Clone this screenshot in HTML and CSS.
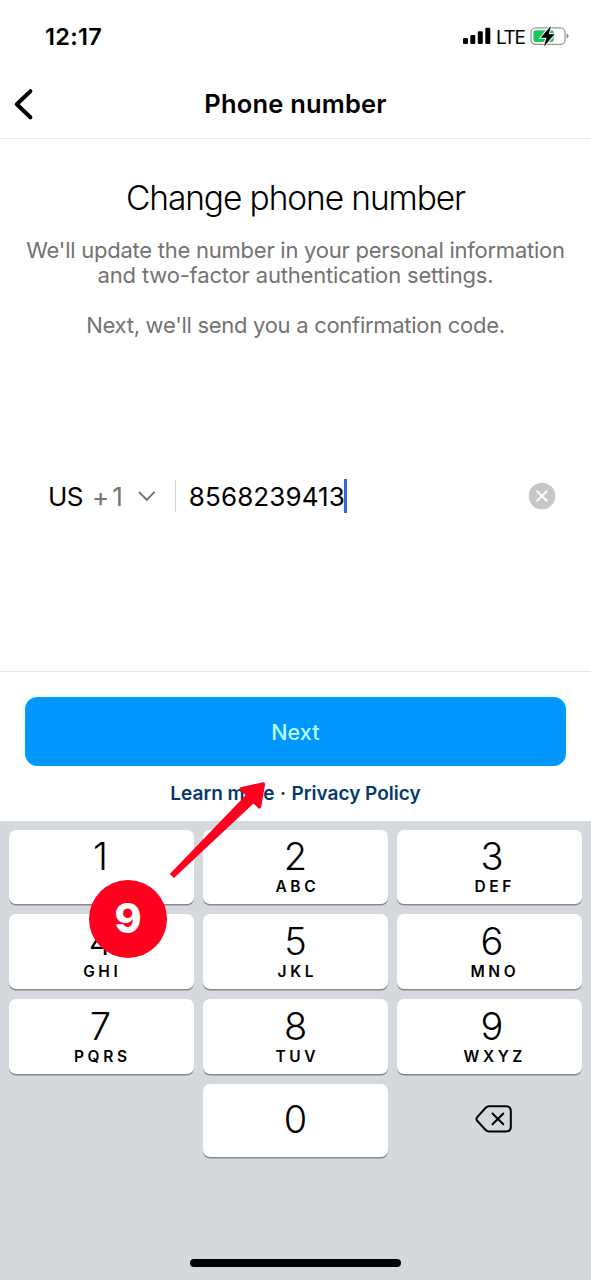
FILE: index.html
```html
<!DOCTYPE html>
<html lang="en">
<head>
<meta charset="utf-8">
<title>Phone number</title>
<link rel="stylesheet" href="styles.css">
</head>
<body>
<div class="screen">
  <div class="status">
    <span class="time">12:17</span>
    <div class="indicators">
      <svg class="signal" width="28" height="18" viewBox="0 0 28 18"><rect x="0" y="11" width="5" height="6" rx="1.3"/><rect x="7.3" y="8" width="5" height="9" rx="1.3"/><rect x="14.8" y="4.2" width="5" height="12.8" rx="1.3"/><rect x="22.3" y="0.8" width="5" height="16.2" rx="1.3"/></svg>
      <span class="lte">LTE</span>
      <svg class="battery" width="39" height="20" viewBox="0 0 39 20"><rect x="1" y="1.9" width="34" height="16.4" rx="4.6" fill="#fff" stroke="#969696" stroke-width="1.2"/><path d="M36.5 7.5q2.2.8 2.2 2.6t-2.2 2.6z" fill="#8c8c8c"/><path d="M6 4.3h15.5q2.2 0 2.2 2.2v7q0 2.5-2.2 2.5H6q-2.6 0-2.6-2.5v-7q0-2.2 2.6-2.2z" fill="#16c75c"/><path d="M20.5.7 11.2 11.6h5.6L14.5 19.6 24 8.5h-5.6z" stroke="#fff" stroke-width="2.6" fill="#fff"/><path d="M20.5.7 11.2 11.6h5.6L14.5 19.6 24 8.5h-5.6z" stroke="#000" stroke-width=".6"/></svg>
    </div>
  </div>
  <header class="header">
    <svg class="back" width="24" height="34" viewBox="0 0 24 34"><path d="M18.4 4.2 4.8 17.3 18.4 30.3" fill="none" stroke="#000" stroke-width="4" stroke-linecap="round" stroke-linejoin="round"/></svg>
    <h1 class="title"><span>Phone number</span></h1>
  </header>
  <main class="content">
    <h2 class="heading"><span>Change phone number</span></h2>
    <p class="copy"><span>We'll update the number in your personal information</span><br><span class="settings">and two-factor authentication settings.</span></p>
    <p class="copy copy-next"><span>Next, we'll send you a confirmation code.</span></p>
    <div class="field">
      <span class="country">US</span>
      <span class="code">+1</span>
      <svg class="chevron" width="20" height="12" viewBox="0 0 20 12"><path d="M2 1.8 9.8 9.8 17.6 1.8" fill="none" stroke="#707070" stroke-width="1.9"/></svg>
      <span class="divider"></span>
      <span class="number">8568239413</span>
      <span class="caret"></span>
      <svg class="clear" width="28" height="28" viewBox="0 0 28 28"><circle cx="14" cy="14" r="13.3" fill="#c7c7c7"/><path d="M9.2 9.4 18.6 18.8M18.6 9.4 9.2 18.8" stroke="#fff" stroke-width="2" stroke-linecap="round"/></svg>
    </div>
  </main>
  <footer class="actions">
    <div class="next"><span>Next</span></div>
    <div class="links"><span class="learn">Learn more</span><span class="dot">·</span><span class="privacy">Privacy Policy</span></div>
  </footer>
  <div class="keyboard">
    <div class="keys">
      <div class="key first"><b>1</b></div>
      <div class="key"><b>2</b><i>ABC</i></div>
      <div class="key last"><b>3</b><i>DEF</i></div>
      <div class="key first"><b>4</b><i>GHI</i></div>
      <div class="key"><b>5</b><i>JKL</i></div>
      <div class="key last"><b>6</b><i>MNO</i></div>
      <div class="key first"><b>7</b><i>PQRS</i></div>
      <div class="key"><b>8</b><i>TUV</i></div>
      <div class="key last"><b>9</b><i>WXYZ</i></div>
      <div></div>
      <div class="key zero"><b>0</b></div>
      <div class="delete"><svg width="38" height="28" viewBox="0 0 38 28"><path d="M14.2 1.3H31q4.8 0 4.8 4.8v15.6q0 4.8-4.8 4.8H14.2q-2 0-3.5-1.5L2.4 16q-1.9-2.1 0-4.2l8.3-9q1.5-1.5 3.5-1.5z" fill="none" stroke="#000" stroke-width="2"/><path d="M17.5 8.5 28.3 19.3M28.3 8.5 17.5 19.3" stroke="#000" stroke-width="2" stroke-linecap="round"/></svg></div>
    </div>
    <div class="home"></div>
  </div>
  <svg class="arrow" width="98" height="98" viewBox="0 0 98 98"><path d="M94 2.2 71.5 7.2Q69.8 8.3 71.2 10L76.6 15.2 .8 94 4.9 98 84.5 23.6 89.3 28.3Q91.3 29.6 92.2 27L96 4.6Q96.2 1.8 94 2.2z" fill="#ff001f"/></svg>
  <div class="step"><span>9</span></div>
</div>
</body>
</html>
```
FILE: styles.css
```css
* { box-sizing: border-box; margin: 0; padding: 0; }
body { width: 591px; background: #fff; font-family: Inter, sans-serif; color: #000; }
span { white-space: nowrap; }
.screen { position: relative; display: flex; flex-direction: column; width: 591px; height: 1280px; overflow: hidden; }
.status { display: flex; justify-content: space-between; height: 72px; padding: 21px 22px 0 45px; }
.time { font-size: 23.5px; line-height: 32px; font-weight: 600; letter-spacing: 0.3px; }
.indicators { display: flex; align-items: flex-start; }
.signal { margin: 6px 5px 0 0; }
.lte { font-size: 19px; line-height: 33px; letter-spacing: -1.4px; width: 34px; }
.battery { margin-top: 5px; }
.header { display: grid; grid-template-columns: 36px 1fr 36px; align-items: center; height: 67px; padding: 0 12px; border-bottom: 1px solid #ebebeb; }
.back { margin-top: -2px; }
.title { margin-top: -2px; text-align: center; font-size: 25.5px; line-height: 32px; font-weight: 600; letter-spacing: 0.2px; }
.content { height: 532px; text-align: center; }
.heading { margin-top: 38px; font-size: 33.5px; line-height: 42px; font-weight: 300; letter-spacing: -1.1px; }
.copy { margin-top: 19px; font-size: 22px; line-height: 25px; color: #737373; letter-spacing: -0.25px; }
.settings { letter-spacing: -0.18px; }
.copy-next { margin-top: 25px; letter-spacing: -0.29px; }
.field { display: flex; align-items: center; height: 36px; margin-top: 140px; padding: 0 35px 0 48px; font-size: 26px; }
.country { letter-spacing: -0.5px; }
.code { margin-left: 9px; color: #737373; letter-spacing: 3px; }
.chevron { margin-left: 11px; }
.divider { width: 1px; height: 32px; margin: 0 13px 0 18px; background: #d0d0d0; }
.number { letter-spacing: 0.1px; }
.caret { width: 3px; height: 34px; margin-left: -1px; background: #3269d6; }
.clear { margin-left: auto; }
.actions { height: 150px; padding: 25px 25px 0; border-top: 1px solid #e3e3e3; }
.next { display: flex; align-items: center; justify-content: center; height: 69px; border: 1px solid #10a0ee; border-radius: 12px; background: #0098ff; box-shadow: 0 0 2px #b5ffff; color: #b8ffff; font-size: 21.5px; font-weight: 500; letter-spacing: 0.1px; }
.links { display: flex; justify-content: center; margin-top: 13px; font-size: 19px; line-height: 29px; font-weight: 600; color: #05386b; }
.dot { width: 17px; text-align: center; color: #333; }
.keyboard { height: 459px; padding: 9px 9px 0; background: #d5d8dd; }
.keys { display: grid; grid-template-columns: repeat(3, 185px); grid-template-rows: 74px 75px 75px 73px; gap: 10px 9px; }
.key { display: flex; flex-direction: column; align-items: center; padding-top: 6px; border-radius: 7px; background: #fff; box-shadow: 0 1.5px 0 #86888c; }
.key:nth-child(-n+3) { padding-top: 5px; }
.first { padding-right: 2px; }
.last { padding-left: 5px; }
.key b { font-size: 38px; line-height: 43px; font-weight: 350; }
.key i { font-size: 15.5px; line-height: 18px; font-style: normal; font-weight: 600; letter-spacing: 3.6px; margin-right: -3.6px; }
.last i { position: relative; left: 1px; }
.key.zero { padding-top: 14px; }
.delete { display: flex; align-items: center; justify-content: center; padding: 0 0 3px 8px; }
.home { width: 211px; height: 8px; margin: 102px 0 0 181px; border-radius: 4px; background: #000; }
.arrow { position: absolute; left: 169px; top: 780px; }
.step { position: absolute; left: 89px; top: 880px; width: 78px; height: 78px; display: flex; align-items: center; justify-content: center; padding-bottom: 3px; border-radius: 50%; background: #ff001f; color: #fff; font-size: 41px; font-weight: 800; }
```
